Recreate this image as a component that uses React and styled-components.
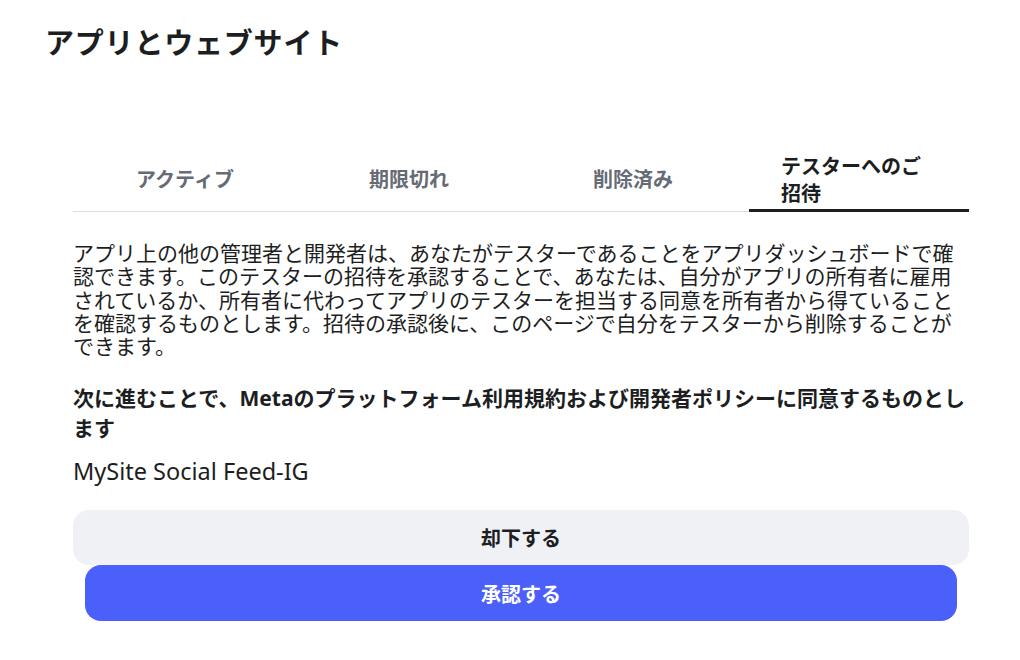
import styled, { createGlobalStyle } from "styled-components";

const GlobalStyle = createGlobalStyle`
  html, body {
    margin: 0;
    padding: 0;
    background: #ffffff;
  }
  body {
    font-family: "Noto Sans", "Noto Sans CJK JP", sans-serif;
    color: #1c1e21;
  }
`

const Page = styled.main`
  width: 1020px;
  height: 660px;
  box-sizing: border-box;
  padding: 24px 51px 0 45px;
  overflow: hidden;
`
const Title = styled.h1`
  margin: 0;
  font-size: 29px;
  font-weight: 700;
  line-height: 38px;
  letter-spacing: 0.8px;
  color: #1c1e21;
`
const Card = styled.section`
  margin: 88px 0 0 28px;
  width: 896px;
`
const TabList = styled.ul`
  list-style: none;
  margin: 0;
  padding: 0;
  display: grid;
  grid-template-columns: repeat(4, 1fr);
  border-bottom: 1px solid #dadde1;
`
const Tab = styled.li`
  display: flex;
  align-items: center;
  justify-content: ${({ $active }) => ($active ? "flex-start" : "center")};
  height: 62px;
  box-sizing: border-box;
  padding: ${({ $active }) => ($active ? "0 32px" : "0 16px")};
  margin-left: ${({ $active }) => ($active ? "4px" : "0")};
  font-size: 20px;
  font-weight: 700;
  line-height: 27px;
  color: ${({ $active }) => ($active ? "#1c1e21" : "#666b74")};
  border-bottom: 3px solid ${({ $active }) => ($active ? "#1c1e21" : "transparent")};
  margin-bottom: -1px;
`
const Body = styled.div`
  padding-top: 30px;
`
const Para = styled.p`
  margin: 0;
  font-size: 21px;
  line-height: ${({ $bold }) => ($bold ? "30px" : "23.3px")};
  font-weight: ${({ $bold }) => ($bold ? 700 : 400)};
  color: #1c1e21;
  & + & {
    margin-top: 25px;
  }
`
const AppName = styled.p`
  margin: 14px 0 0 0;
  font-family: "Noto Sans", "Noto Sans CJK JP", sans-serif;
  font-size: 23.5px;
  line-height: 28px;
  color: #1c1e21;
`
const Actions = styled.div`
  margin-top: 25px;
  display: flex;
  flex-direction: column;
`
const Button = styled.button`
  display: flex;
  align-items: center;
  justify-content: center;
  height: ${({ $primary }) => ($primary ? "56px" : "55px")};
  margin: ${({ $primary }) => ($primary ? "0 12px" : "0")};
  border: none;
  border-radius: 16px;
  background: ${({ $primary }) => ($primary ? "#4b5ffb" : "#f0f1f5")};
  color: ${({ $primary }) => ($primary ? "#ffffff" : "#1c1e21")};
  font-family: "Noto Sans", "Noto Sans CJK JP", sans-serif;
  font-size: 20px;
  font-weight: 700;
  cursor: pointer;
`

const tabs = [
  { label: "アクティブ" },
  { label: "期限切れ" },
  { label: "削除済み" },
  { label: "テスターへのご招待", active: true },
]

export default function App() {
  return (
    <>
      <GlobalStyle />
      <Page>
        <Title>アプリとウェブサイト</Title>
        <Card>
          <TabList>
            {tabs.map((t) => (
              <Tab key={t.label} $active={t.active}>{t.label}</Tab>
            ))}
          </TabList>
          <Body>
            <Para>
              アプリ上の他の管理者と開発者は、あなたがテスターであることをアプリダッシュボードで確認できます。このテスターの招待を承認することで、あなたは、自分がアプリの所有者に雇用されているか、所有者に代わってアプリのテスターを担当する同意を所有者から得ていることを確認するものとします。招待の承認後に、このページで自分をテスターから削除することができます。
            </Para>
            <Para $bold>
              次に進むことで、Metaのプラットフォーム利用規約および開発者ポリシーに同意するものとします
            </Para>
            <AppName>MySite Social Feed-IG</AppName>
          </Body>
          <Actions>
            <Button>却下する</Button>
            <Button $primary>承認する</Button>
          </Actions>
        </Card>
      </Page>
    </>
  )
}
